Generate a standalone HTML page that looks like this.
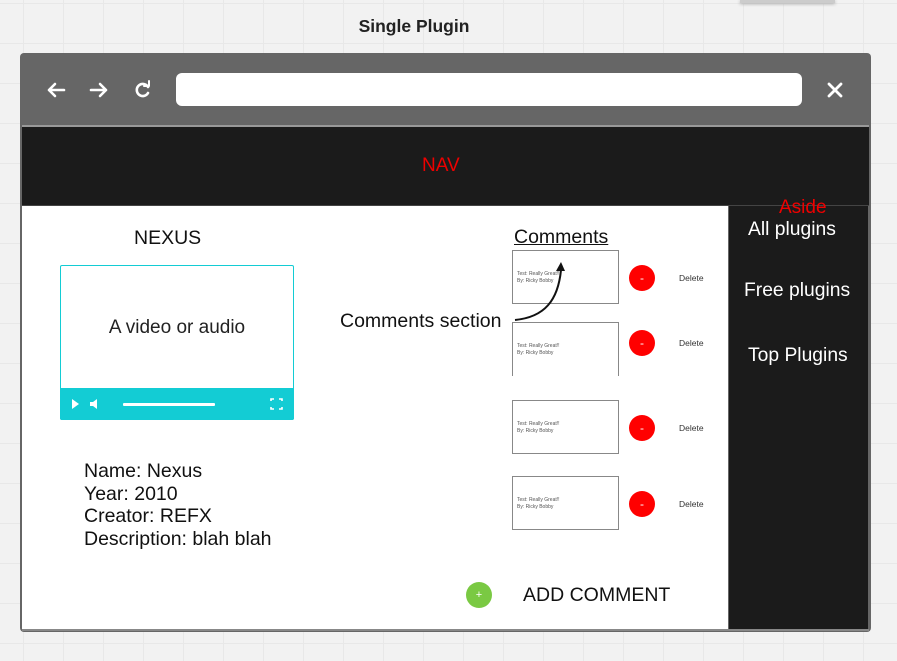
<!DOCTYPE html>
<html><head><style>
body{margin:0;width:897px;height:661px;overflow:hidden;background:#f2f2f2;
background-image:linear-gradient(#e8e8e8 1px,transparent 1px),linear-gradient(90deg,#e8e8e8 1px,transparent 1px);background-size:40px 40px;background-position:23px 3px;
font-family:"Liberation Sans",sans-serif;position:relative}
.a{position:absolute}
.cb{border:1px solid #888;background:#fff;width:107px;height:54px;font-size:5px;color:#555;box-sizing:border-box;padding:20px 0 0 4px;line-height:7px}
.del{width:26px;height:26px;border-radius:50%;background:#f00;color:#fff;font-size:12px;text-align:center;line-height:26px}
.dt{font-size:8.5px;color:#333}
.t{font-size:19.5px;color:#111}
</style></head><body>
<div class="a" style="left:740px;top:0;width:95px;height:3px;background:#ccc;box-shadow:0 1px 3px #aaa"></div>
<div class="a" style="left:0;width:828px;top:16px;text-align:center;font-weight:bold;font-size:17.5px;color:#222">Single Plugin</div>
<div class="a" style="left:20px;top:53px;width:851px;height:579px;background:#666;border-radius:4px"></div>
<svg class="a" style="left:40px;top:78px" width="130" height="24" fill="none" stroke="#fff" stroke-width="2.6" stroke-linecap="round" stroke-linejoin="round">
<path d="M24 12H9M15 6l-6 6 6 6"/><path d="M51 12h15M60 6l6 6-6 6"/>
<path d="M108 9a6 6 0 1 0 0 6"/><path d="M104 8h5V3" stroke-width="2"/></svg>
<div class="a" style="left:176px;top:73px;width:626px;height:33px;background:#fff;border-radius:6px"></div>
<svg class="a" style="left:826px;top:81px" width="18" height="18" stroke="#fff" stroke-width="2.8" stroke-linecap="round"><path d="M3 3l12 12M15 3L3 15"/></svg>
<div class="a" style="left:22px;top:125px;width:847px;height:2px;background:#999"></div>
<div class="a" style="left:22px;top:127px;width:847px;height:78px;background:#1b1b1b"></div>
<div class="a" style="left:422px;top:155px;color:#e00;font-size:19px">NAV</div>
<div class="a" style="left:22px;top:205px;width:847px;height:1px;background:#444"></div>
<div class="a" style="left:22px;top:206px;width:706px;height:424px;background:#fff"></div>
<div class="a" style="left:729px;top:206px;width:139px;height:424px;background:#1b1b1b"></div>
<div class="a" style="left:22px;top:629px;width:847px;height:2px;background:#888"></div>
<div class="a" style="left:779px;top:197px;color:#e00;font-size:19px">Aside</div>
<div class="a" style="left:748px;top:219px;color:#fff;font-size:19.3px">All plugins</div>
<div class="a" style="left:744px;top:280px;color:#fff;font-size:19.3px">Free plugins</div>
<div class="a" style="left:748px;top:345px;color:#fff;font-size:19.3px">Top Plugins</div>
<div class="a t" style="left:134px;top:227px">NEXUS</div>
<div class="a" style="left:60px;top:265px;width:234px;height:155px;border:1px solid #13ccd4;box-sizing:border-box;border-radius:2px;background:#fff"></div>
<div class="a" style="left:60px;top:317px;width:234px;text-align:center;font-size:19px;color:#222">A video or audio</div>
<div class="a" style="left:60px;top:388px;width:234px;height:32px;background:#13ccd4;border-radius:0 0 2px 2px"></div>
<svg class="a" style="left:60px;top:388px" width="234" height="32"><path d="M12 11l7 5-7 5z" fill="#fff"/><path d="M30 14h3l4-3v10l-4-3h-3z" fill="#fff"/><rect x="63" y="15" width="92" height="3" rx="1" fill="#fff"/><path d="M211 13v-2h3M219 11h3v2M222 19v2h-3M214 21h-3v-2" stroke="#fff" stroke-width="1.6" fill="none"/></svg>
<div class="a t" style="left:84px;top:460px;line-height:22.5px">Name: Nexus<br>Year: 2010<br>Creator: REFX<br>Description: blah blah</div>
<div class="a t" style="left:340px;top:310px">Comments section</div>
<div class="a t" style="left:514px;top:226px;text-decoration:underline">Comments</div>
<div class="a cb" style="left:512px;top:250px">Test: Really Great!!<br>By: Ricky Bobby</div>
<div class="a cb" style="left:512px;top:322px;border-bottom:none">Test: Really Great!!<br>By: Ricky Bobby</div>
<div class="a cb" style="left:512px;top:400px">Test: Really Great!!<br>By: Ricky Bobby</div>
<div class="a cb" style="left:512px;top:476px">Test: Really Great!!<br>By: Ricky Bobby</div>
<svg class="a" style="left:510px;top:255px" width="60" height="70" fill="none"><path d="M5 65C35 62 48 45 51 15" stroke="#111" stroke-width="2"/><path d="M46 16l5-9 4 9z" fill="#111"/></svg>
<div class="a del" style="left:629px;top:265px">-</div>
<div class="a del" style="left:629px;top:330px">-</div>
<div class="a del" style="left:629px;top:415px">-</div>
<div class="a del" style="left:629px;top:491px">-</div>
<div class="a dt" style="left:679px;top:273px">Delete</div>
<div class="a dt" style="left:679px;top:338px">Delete</div>
<div class="a dt" style="left:679px;top:423px">Delete</div>
<div class="a dt" style="left:679px;top:499px">Delete</div>
<div class="a" style="left:466px;top:582px;width:26px;height:26px;border-radius:50%;background:#7ac943;color:#fff;font-size:11px;text-align:center;line-height:26px">+</div>
<div class="a t" style="left:523px;top:584px">ADD COMMENT</div>
</body></html>
